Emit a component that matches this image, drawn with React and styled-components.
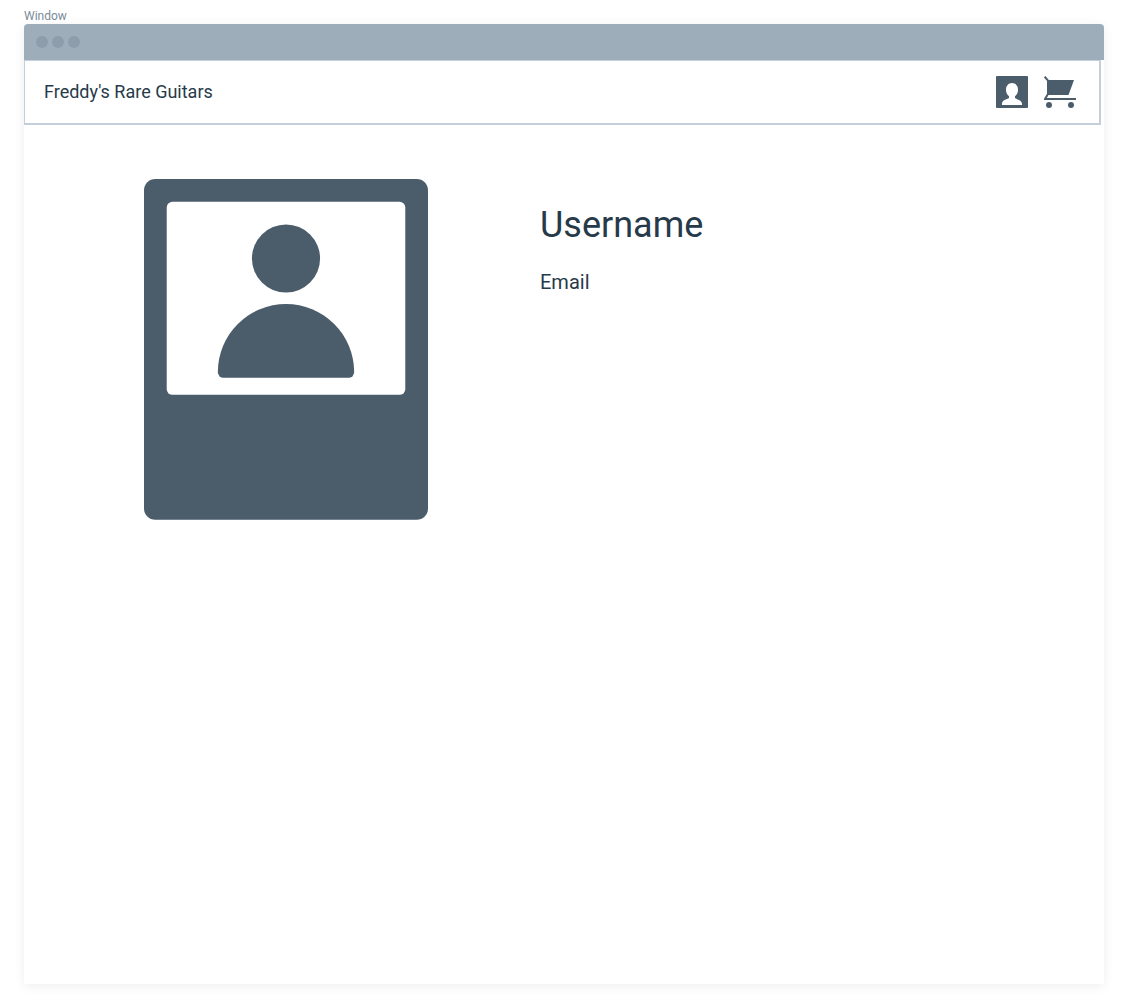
import React from 'react';
import styled, { createGlobalStyle } from 'styled-components';

const GlobalStyle = createGlobalStyle`
  *, *::before, *::after { box-sizing: border-box; }
  body {
    margin: 0;
    background: #ffffff;
    color: #273a49;
    font-family: Roboto, "Liberation Sans", sans-serif;
  }
`;

const Page = styled.div`
  display: flex;
  flex-direction: column;
  min-height: 100vh;
  padding: 9px 24px 24px;
`;

const Caption = styled.div`
  font-size: 12px;
  line-height: 15px;
  color: #7b8b99;
`;

const Window = styled.section`
  flex: 1;
  border-radius: 4px 4px 0 0;
  background: #ffffff;
  box-shadow: 0 2px 12px rgba(0, 0, 0, 0.07);
`;

const TitleBar = styled.div`
  display: flex;
  align-items: center;
  gap: 4px;
  height: 36px;
  padding: 0 12px;
  border-radius: 4px 4px 0 0;
  background: #9eadba;
`;

const Dot = styled.span`
  width: 12px;
  height: 12px;
  border-radius: 50%;
  background: #8d9dac;
`;

const Header = styled.header`
  display: flex;
  align-items: center;
  justify-content: space-between;
  height: 65px;
  margin-right: 3px;
  padding: 0 23px 0 19px;
  border: solid #c3d0db;
  border-width: 1px 2px 2px 1px;
`;

const Brand = styled.a`
  color: inherit;
  font-size: 18px;
  line-height: 24px;
  text-decoration: none;
`;

const Actions = styled.nav`
  display: flex;
  gap: 16px;
`;

const IconButton = styled.button`
  display: block;
  width: 32px;
  height: 32px;
  padding: 0;
  border: 0;
  background: none;
  color: #4b5c6b;
  cursor: pointer;

  svg { display: block; }
`;

const Profile = styled.main`
  display: flex;
  align-items: flex-start;
  gap: 112px;
  padding: 54px 120px;
`;

const Portrait = styled.svg`
  flex: none;
  display: block;
  width: 284px;
  color: #4b5c6b;
`;

const Details = styled.div`
  padding-top: 22px;
`;

const Username = styled.h1`
  margin: 0;
  font-size: 36px;
  font-weight: 400;
  line-height: 48px;
`;

const Email = styled.p`
  margin: 19px 0 0;
  font-size: 20px;
  line-height: 28px;
`;

function AccountIcon() {
  return (
    <svg width="32" height="32" viewBox="0 0 32 32" aria-hidden="true">
      <rect width="32" height="32" rx="1" fill="currentColor" />
      <path
        fill="#ffffff"
        d="M16 7c3.6 0 6 2.8 6 6.8 0 2.9-1.1 5.2-3 6.4v1.3c0 .6.3.9.9 1.1 3.5 1.2 6.1 2.3 6.1 5.4v1H6v-1c0-3.1 2.6-4.2 6.1-5.4.6-.2.9-.5.9-1.1v-1.300c-1.900-1.200-3-3.500-3-6.400C10 9.800 12.400 7 16 7z"
      />
    </svg>
  );
}

function CartIcon() {
  return (
    <svg width="32" height="32" viewBox="0 0 32 32" aria-hidden="true">
      <path
        d="M.7.7 4 4.5V18L1 23h31"
        fill="none"
        stroke="currentColor"
        strokeWidth="2"
      />
      <path d="M3 4h27l-5.500 15H3z" fill="currentColor" />
      <circle cx="5" cy="29" r="3" fill="currentColor" />
      <circle cx="27" cy="29" r="3" fill="currentColor" />
    </svg>
  );
}

function PortraitPicture() {
  return (
    <Portrait viewBox="0 0 25 30" role="img" aria-label="Profile picture">
      <rect width="25" height="30" rx="1" fill="currentColor" />
      <rect x="2" y="2" width="21" height="17" rx="0.5" fill="#ffffff" />
      <circle cx="12.5" cy="7" r="3" fill="currentColor" />
      <path
        fill="currentColor"
        d="M12.5 11a6 6 0 0 1 6 6a.5.5 0 0 1-.5.5H7a.5.5 0 0 1-.5-.5a6 6 0 0 1 6-6z"
      />
    </Portrait>
  );
}

export default function App() {
  return (
    <>
      <GlobalStyle />
      <Page>
        <Caption>Window</Caption>
        <Window>
          <TitleBar>
            <Dot />
            <Dot />
            <Dot />
          </TitleBar>
          <Header>
            <Brand href="#">Freddy's Rare Guitars</Brand>
            <Actions>
              <IconButton type="button" aria-label="Account">
                <AccountIcon />
              </IconButton>
              <IconButton type="button" aria-label="Cart">
                <CartIcon />
              </IconButton>
            </Actions>
          </Header>
          <Profile>
            <PortraitPicture />
            <Details>
              <Username>Username</Username>
              <Email>Email</Email>
            </Details>
          </Profile>
        </Window>
      </Page>
    </>
  );
}
